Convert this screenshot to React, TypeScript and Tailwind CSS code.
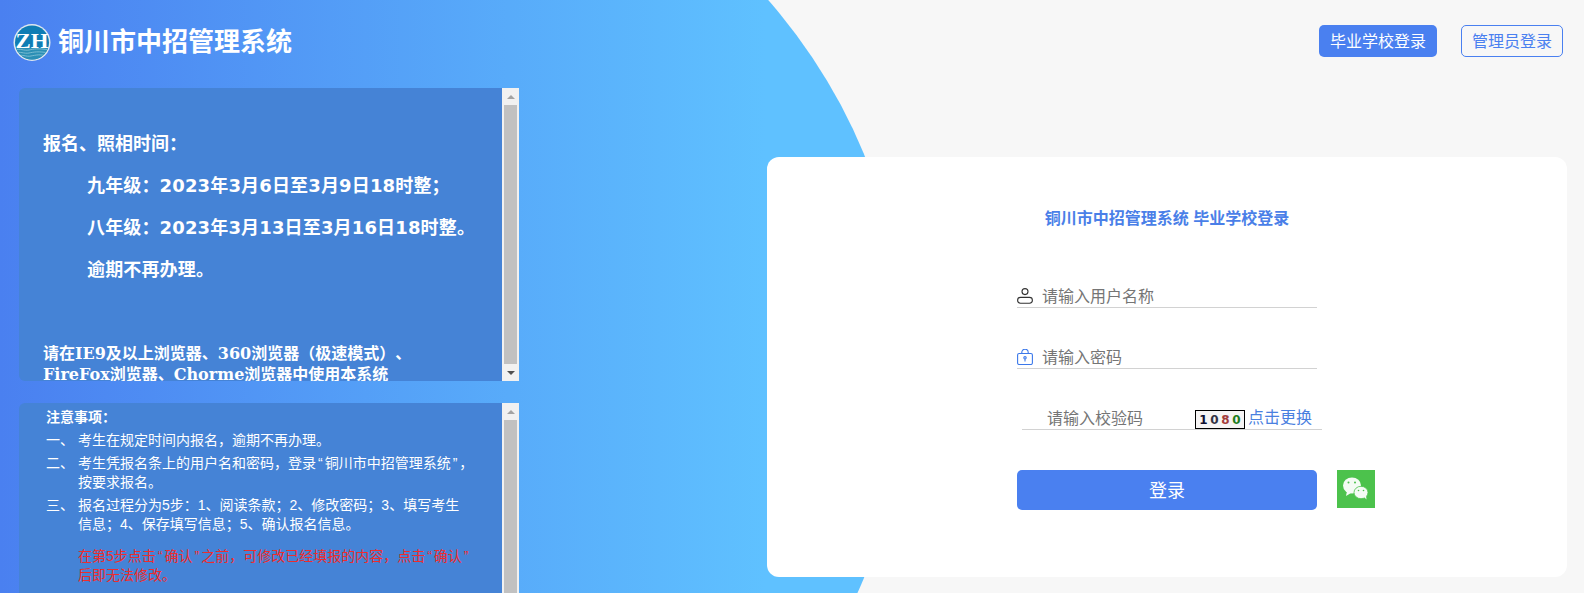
import type { ReactNode } from 'react';

const sans = 'font-["DejaVu_Sans","Noto_Sans_CJK_SC",sans-serif]';

// the quotes sit a bit wider apart than the font gives them
const Q = ({ children }: { children: ReactNode }) => <span className="px-[2px]">{children}</span>;

const Logo = () => (
  <svg width="38" height="37" viewBox="0 0 38 37" className="shrink-0">
    <defs>
      <clipPath id="logo-clip">
        <circle cx="19" cy="18.5" r="17" />
      </clipPath>
    </defs>
    <circle cx="19" cy="18.5" r="18.5" fill="#dfe8ee" />
    <circle cx="19" cy="18.5" r="17" fill="#0f7db4" />
    <g clipPath="url(#logo-clip)">
      <rect x="0" y="24" width="38" height="14" fill="#2b8fb5" />
      <path d="M2 26c5-2 9 1 14 0s9-2 20 0M2 29c5-2 9 1 14 0s9-2 20 0M4 32c5-2 9 1 14 0s9-2 16 0" fill="none" stroke="#8cc6d8" strokeWidth="0.8" />
    </g>
    <text x="19" y="24" textAnchor="middle" fill="#fff" fontFamily="Liberation Serif" fontWeight="700" fontSize="22" textLength="33" lengthAdjust="spacingAndGlyphs">
      ZH
    </text>
  </svg>
);

const Scrollbar = () => (
  <div className="flex w-[17px] shrink-0 flex-col items-center bg-[#f1f1f1]">
    <div className="flex h-[17px] w-full shrink-0 items-center justify-center">
      <div className="h-0 w-0 border-x-[4px] border-b-[4px] border-x-transparent border-b-[#a3a3a3]" />
    </div>
    <div className="w-[13px] flex-1 bg-[#c1c1c1]" />
    <div className="flex h-[17px] w-full shrink-0 items-center justify-center">
      <div className="h-0 w-0 border-x-[4px] border-t-[4px] border-x-transparent border-t-[#505050]" />
    </div>
  </div>
);

const NoticePanel = () => (
  <div className="flex h-[293px] w-[500px] overflow-hidden rounded-l-md">
    <div className={`flex-1 overflow-hidden bg-[#4583d6] pl-6 pt-[35px] font-bold text-white ${sans}`}>
      <p className="text-[18px] leading-[42px]">报名、照相时间：</p>
      <div className="pl-11 text-[18px] leading-[42px] tracking-[0.15px]">
        <p>九年级：2023年3月6日至3月9日18时整；</p>
        <p>八年级：2023年3月13日至3月16日18时整。</p>
        <p>逾期不再办理。</p>
      </div>
      <p className='mt-[52px] font-["DejaVu_Serif","Noto_Sans_CJK_SC",serif] text-[16px] leading-[21px] [text-spacing-trim:space-all]'>
        请在IE9及以上浏览器、360浏览器（极速模式）、
        <br />
        FireFox浏览器、Chorme浏览器中使用本系统
      </p>
    </div>
    <Scrollbar />
  </div>
);

const steps: { no: string; text: ReactNode }[] = [
  { no: '一、', text: '考生在规定时间内报名，逾期不再办理。' },
  { no: '二、', text: <>考生凭报名条上的用户名和密码，登录<Q>“</Q>铜川市中招管理系统<Q>”</Q>，<br />按要求报名。</> },
  { no: '三、', text: <>报名过程分为5步：1、阅读条款；2、修改密码；3、填写考生<br />信息；4、保存填写信息；5、确认报名信息。</> },
];

const RulesPanel = () => (
  <div className="mt-[22px] flex h-[190px] w-[500px] shrink-0 overflow-hidden rounded-tl-md">
    <div className='flex-1 overflow-hidden whitespace-nowrap bg-[#4583d6] pl-[27px] pt-[5px] font-["Liberation_Sans","Noto_Sans_CJK_SC",sans-serif] text-[14px] leading-[19px] text-white'>
      <p className="mb-[4px] font-bold">注意事项：</p>
      {steps.map(s => (
        <div key={s.no} className="mt-1 flex">
          <span className="w-[32px] shrink-0">{s.no}</span>
          <span>{s.text}</span>
        </div>
      ))}
      <p className="mt-[13px] pl-[32px] text-[#ee2c2c]">
        在第5步点击<Q>“</Q>确认<Q>”</Q>之前，可修改已经填报的内容，点击<Q>“</Q>确认<Q>”</Q>
        <br />
        后即无法修改。
      </p>
    </div>
    <div className="flex w-[17px] shrink-0 flex-col items-center bg-[#f1f1f1]">
      <div className="flex h-[17px] w-full shrink-0 items-center justify-center">
        <div className="h-0 w-0 border-x-[4px] border-b-[4px] border-x-transparent border-b-[#a3a3a3]" />
      </div>
      <div className="w-[13px] flex-1 bg-[#c1c1c1]" />
    </div>
  </div>
);

const UserIcon = () => (
  <svg width="16" height="16" viewBox="0 0 16 16" fill="none" stroke="#333" strokeWidth="1.1" className="mb-[3px] shrink-0">
    <circle cx="8" cy="3.600" r="3" />
    <rect x="0.600" y="9.400" width="14.800" height="5.800" rx="2.900" />
  </svg>
);

const LockIcon = () => (
  <svg width="16" height="16" viewBox="0 0 16 16" fill="none" stroke="#3b78ea" strokeWidth="1.1" className="mb-[3px] shrink-0">
    <path d="M4.800 4.500V3.400a3.200 3.200 0 0 1 6.400 0v1.100" />
    <rect x="0.600" y="4.500" width="14.800" height="11" rx="1.500" />
    <circle cx="8" cy="8.800" r="1.200" />
    <path d="M8 10v2.400" />
  </svg>
);

const WechatIcon = () => (
  <svg width="38" height="38" viewBox="0 0 38 38" className="block shrink-0">
    <rect width="38" height="38" fill="#4cc24c" />
    <ellipse cx="15" cy="15.500" rx="9" ry="8" fill="#f4fbf4" />
    <path d="M10 21l-1 5 5-3z" fill="#f4fbf4" />
    <ellipse cx="24" cy="22.500" rx="7" ry="6.200" fill="#f4fbf4" stroke="#4cc24c" strokeWidth="0.800" />
    <path d="M27 27l2.500 2.500-.5-4z" fill="#f4fbf4" />
    <circle cx="11.500" cy="12.500" r="1" fill="#4cc24c" />
    <circle cx="18" cy="12.500" r="1" fill="#4cc24c" />
    <circle cx="21.500" cy="20.500" r="0.800" fill="#4cc24c" />
    <circle cx="26.500" cy="20.500" r="0.800" fill="#4cc24c" />
  </svg>
);

const Captcha = () => (
  <div className='flex h-[19px] w-[50px] shrink-0 items-center justify-around border border-black bg-[#f6f4f4] px-[2px] font-["DejaVu_Sans",sans-serif] text-[12px] font-bold leading-none'>
    <span className="text-[#101030]">1</span>
    <span className="text-[#333344]">0</span>
    <span className="text-[#a33b3b]">8</span>
    <span className="text-[#1e7d1e]">0</span>
  </div>
);

const LoginCard = () => (
  <div className="mr-[17px] mt-[100px] h-[420px] w-[800px] rounded-[12px] bg-white pt-[50px]">
    <h2 className="text-center text-[16px] font-bold leading-6 text-[#4a7fe8]">铜川市中招管理系统 毕业学校登录</h2>
    <div className="ml-[250px] mt-[47px] w-[300px]">
      <label className="flex h-[30px] items-end gap-[9px] border-b border-[#d2d2d2]">
        <UserIcon />
        <input placeholder="请输入用户名称" className="h-[20px] min-w-0 flex-1 bg-transparent text-[16px] outline-none placeholder:text-[#757575]" />
      </label>
      <label className="mt-[31px] flex h-[30px] items-end gap-[9px] border-b border-[#d2d2d2]">
        <LockIcon />
        <input placeholder="请输入密码" className="h-[20px] min-w-0 flex-1 bg-transparent text-[16px] outline-none placeholder:text-[#757575]" />
      </label>
      <div className="ml-[5px] mt-[31px] flex h-[30px] w-[300px] items-end border-b border-[#d2d2d2] pl-[25px]">
        <input placeholder="请输入校验码" className="h-[20px] w-[148px] min-w-0 bg-transparent text-[16px] outline-none placeholder:text-[#757575]" />
        <Captcha />
        <a className="ml-[3px] whitespace-nowrap text-[16px] leading-[22px] text-[#4a80e0]">点击更换</a>
      </div>
      <div className="mt-[40px] flex w-[358px] items-start gap-5">
        <button className="h-10 w-[300px] shrink-0 rounded-[5px] bg-[#4a80f0] pt-[2px] text-[18px] text-white">登录</button>
        <WechatIcon />
      </div>
    </div>
  </div>
);

export default function App() {
  return (
    <div className='relative flex h-[593px] w-[1584px] justify-between overflow-hidden bg-[#f7f7f7] font-["Liberation_Sans","Noto_Sans_CJK_SC",sans-serif]'>
      {/* big circle behind the left side */}
      <div className="absolute left-[-204px] top-[-189px] h-[1110px] w-[1110px] rounded-full bg-[linear-gradient(90deg,#4a80f0_204px,#5fc1ff_970px)]" />

      <div className="relative flex w-[530px] flex-col">
        <div className="flex h-[88px] items-center gap-[7px] pb-[4px] pl-[13px]">
          <Logo />
          <h1 className="text-[26px] font-bold text-white">铜川市中招管理系统</h1>
        </div>
        <div className="ml-[19px] flex flex-col">
          <NoticePanel />
          <RulesPanel />
        </div>
      </div>

      <div className="relative flex flex-col items-end">
        <div className="mr-[21px] mt-[25px] flex gap-6 text-[16px]">
          <button className="h-8 w-[118px] rounded-[5px] bg-[#4a80f0] pt-px text-white">毕业学校登录</button>
          <button className="h-8 w-[102px] rounded-[5px] border border-[#4a80f0] pt-px text-[#4a80f0]">管理员登录</button>
        </div>
        <LoginCard />
      </div>
    </div>
  );
}
